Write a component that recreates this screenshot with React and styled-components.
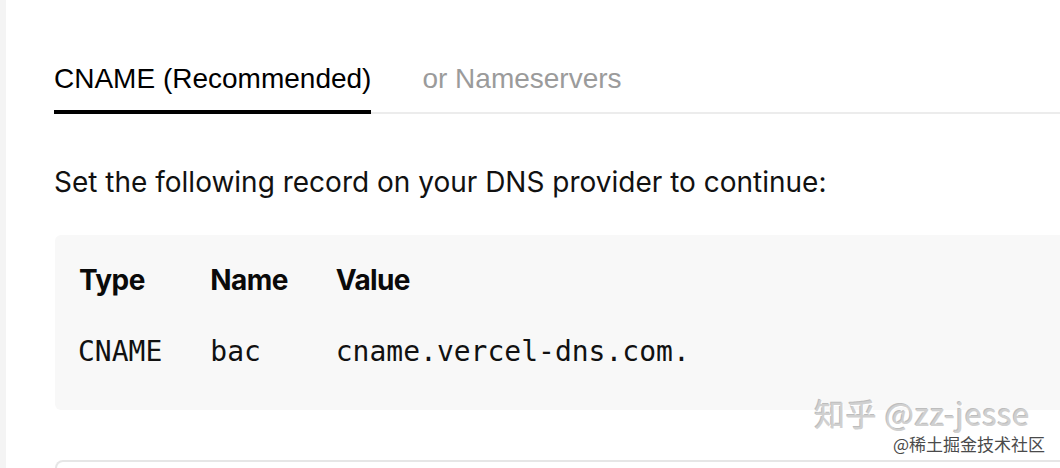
import React from "react";
import styled, { createGlobalStyle } from "styled-components";

const Global = createGlobalStyle`
  html, body { margin: 0; padding: 0; background: #fff; }
  body { overflow: hidden; }
`;

const Page = styled.div`
  position: relative;
  display: flex;
  width: 1060px;
  height: 468px;
  overflow: hidden;
  background: #fff;
`;

const SideStrip = styled.div`
  width: 6px;
  flex: none;
  background: #f4f4f4;
`;

const Main = styled.div`
  flex: 1;
  padding: 63px 0 0 48px;
  display: flex;
  flex-direction: column;
`;

const TabBar = styled.div`
  display: flex;
  gap: 51px;
  border-bottom: 2px solid #ececec;
`;

const Tab = styled.div`
  font-family: "Liberation Sans", Arial, sans-serif;
  font-size: 28px;
  line-height: 32px;
  padding-bottom: 15px;
  margin-bottom: -2px;
  color: ${(p) => (p.$active ? "#000" : "#9b9b9b")};
  border-bottom: 4px solid ${(p) => (p.$active ? "#000" : "transparent")};
`;

const Intro = styled.p`
  margin: 51px 0 0;
  font-family: Inter, "Liberation Sans", sans-serif;
  font-size: 28px;
  line-height: 34px;
  color: #111;
`;

const RecordBox = styled.div`
  margin: 36px -40px 0 1px;
  padding: 28px 0 41px;
  background: #f8f8f8;
  border-radius: 6px;
`;

const Table = styled.table`
  border-collapse: collapse;
`;

const HeadCell = styled.th`
  padding: 0 24px;
  text-align: left;
  font-family: Inter, "Liberation Sans", sans-serif;
  font-weight: 700;
  font-size: 28px;
  line-height: 34px;
  letter-spacing: -0.6px;
  color: #0a0a0a;
`;

const Cell = styled.td`
  padding: 38px 24px 0;
  font-family: "DejaVu Sans Mono", "Liberation Mono", monospace;
  font-size: 28px;
  line-height: 34px;
  color: #111;
  white-space: nowrap;
  &:first-child { padding-left: 23px; }
`;

const NextCard = styled.div`
  margin: 50px -40px 0 1px;
  height: 40px;
  border: 2px solid #e6e6e6;
  border-bottom: none;
  border-radius: 10px 10px 0 0;
`;

const Watermark = styled.div`
  position: absolute;
  right: 15px;
  bottom: 15px;
  display: flex;
  flex-direction: column;
  align-items: flex-end;
  gap: 7px;
  pointer-events: none;
`;

const MarkMain = styled.div`
  font-family: "Noto Sans CJK SC", "Liberation Sans", sans-serif;
  font-size: 31px;
  line-height: 30px;
  color: #d0d0d0;
  text-shadow: 1px 1px 0 #fff, -1px -1px 0 #bdbdbd;
  margin-right: 15px;
  letter-spacing: 0.5px;
`;

const MarkSub = styled.div`
  font-family: "Noto Sans CJK SC", "Liberation Sans", sans-serif;
  font-size: 17px;
  line-height: 18px;
  color: #4a4a4a;
  text-shadow: 0 0 2px #fff, 0 0 2px #fff;
`;

export default function App() {
  return (
    <Page>
      <Global />
      <SideStrip />
      <Main>
        <TabBar>
          <Tab $active>CNAME (Recommended)</Tab>
          <Tab>or Nameservers</Tab>
        </TabBar>
        <Intro>Set the following record on your DNS provider to continue:</Intro>
        <RecordBox>
          <Table>
            <thead>
              <tr>
                <HeadCell>Type</HeadCell>
                <HeadCell>Name</HeadCell>
                <HeadCell>Value</HeadCell>
              </tr>
            </thead>
            <tbody>
              <tr>
                <Cell>CNAME</Cell>
                <Cell>bac</Cell>
                <Cell>cname.vercel-dns.com.</Cell>
              </tr>
            </tbody>
          </Table>
        </RecordBox>
        <NextCard />
      </Main>
      <Watermark>
        <MarkMain>知乎 @zz-jesse</MarkMain>
        <MarkSub>@稀土掘金技术社区</MarkSub>
      </Watermark>
    </Page>
  );
}
